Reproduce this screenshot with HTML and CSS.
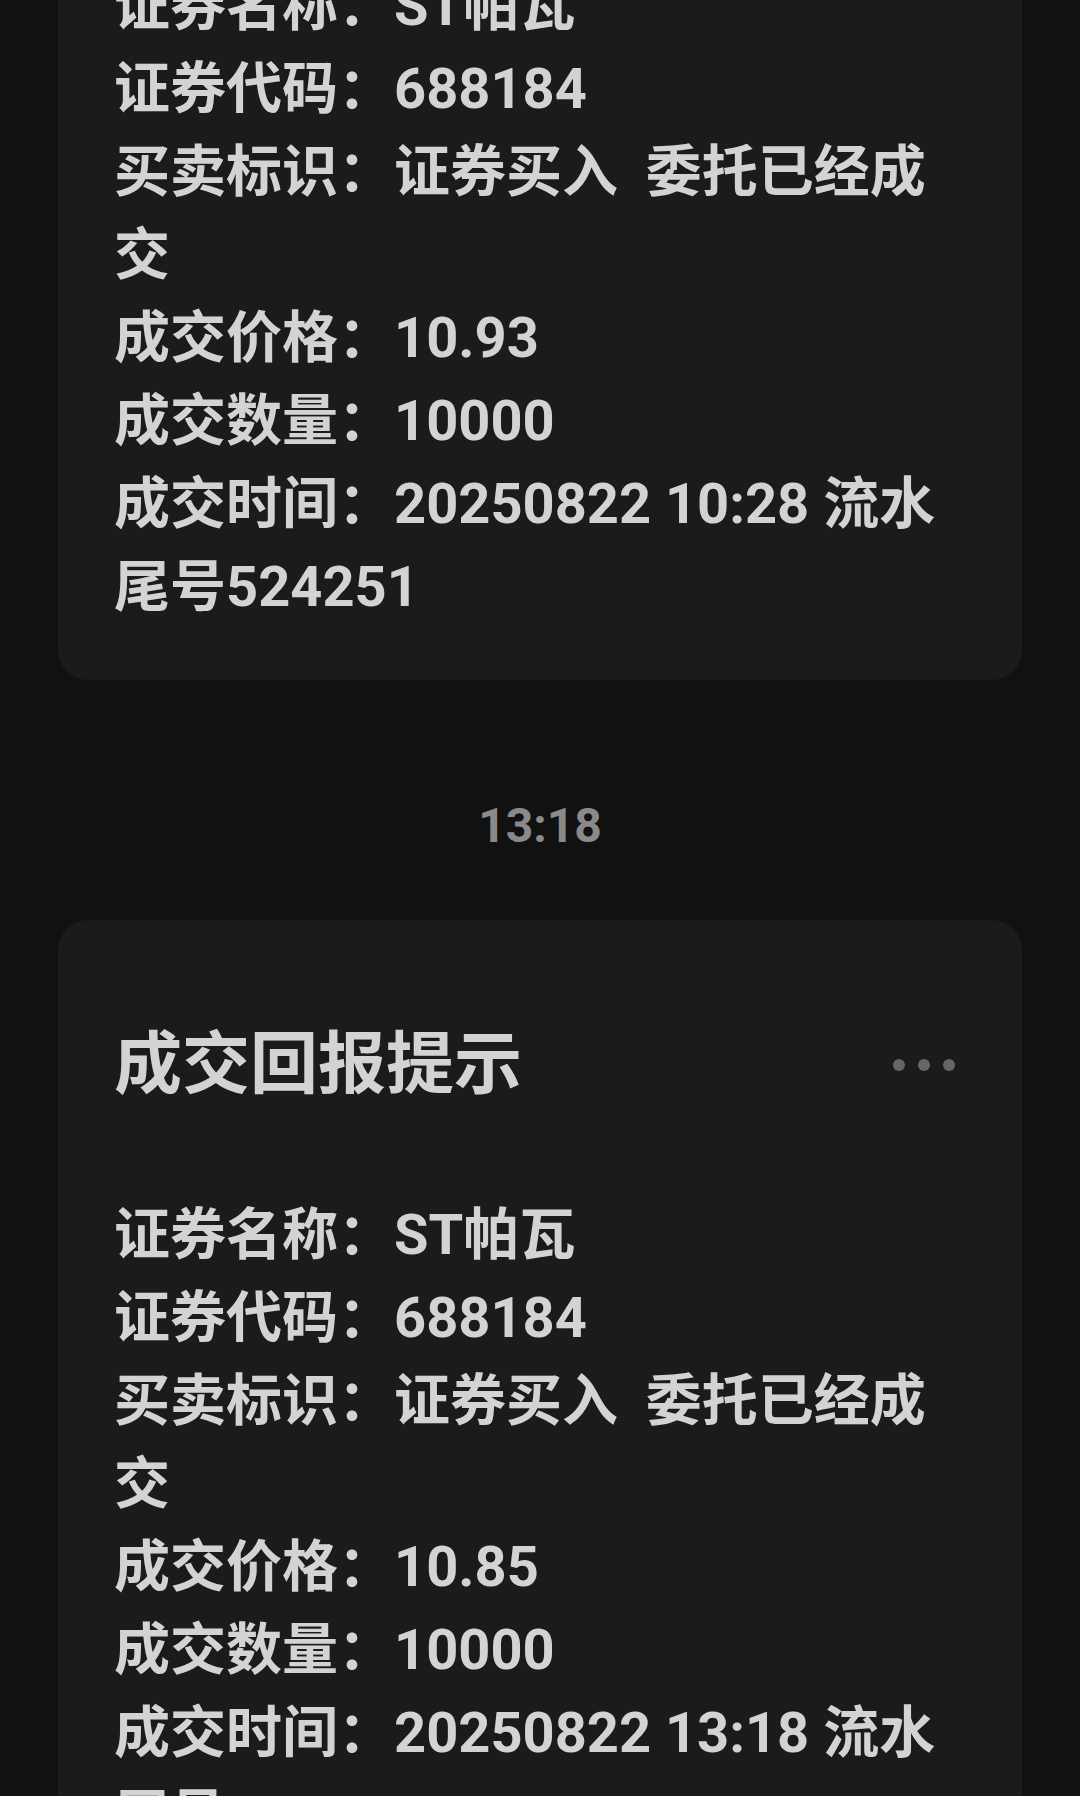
FILE: index.html
```html
<!DOCTYPE html>
<html lang="zh-CN">
<head>
    <meta charset="UTF-8">
    <meta name="viewport" content="width=device-width, initial-scale=1.0">
    <title>成交回报提示</title>
    <link rel="stylesheet" href="styles.css">
</head>
<body>
    <!-- message feed, scrolled part way down -->
    <div class="feed">
        <div class="card">
            <div class="card-head">
                <div class="card-title">成交回报提示</div>
                <div class="more"><span></span><span></span><span></span></div>
            </div>
            <div class="card-body">
                <div>证券名称：ST帕瓦</div>
                <div>证券代码：688184</div>
                <div>买卖标识：证券买入&nbsp; 委托已经成交</div>
                <div>成交价格：10.93</div>
                <div>成交数量：10000</div>
                <div>成交时间：20250822 10:28 流水尾号524251</div>
            </div>
        </div>

        <div class="time">13:18</div>

        <div class="card">
            <div class="card-head">
                <div class="card-title">成交回报提示</div>
                <div class="more"><span></span><span></span><span></span></div>
            </div>
            <div class="card-body">
                <div>证券名称：ST帕瓦</div>
                <div>证券代码：688184</div>
                <div>买卖标识：证券买入&nbsp; 委托已经成交</div>
                <div>成交价格：10.85</div>
                <div>成交数量：10000</div>
                <div>成交时间：20250822 13:18 流水尾号</div>
            </div>
        </div>
    </div>
</body>
</html>
```

FILE: styles.css
```css
/* page */
body {
    margin: 0;
    background-color: #111111;
    font-family: Roboto, "Noto Sans CJK SC", sans-serif;
    font-weight: 700;
    color: #d3d3d3;
    overflow: hidden;
}

/* feed list, offset as if scrolled */
.feed {
    margin-top: -309px;
    padding: 0 58px;
}

/* message card */
.card {
    background: #1b1b1b;
    border-radius: 30px;
    padding: 97px 58px 51px 56px;
}

.card-head {
    display: flex;
    justify-content: space-between;
    align-items: center;
}

.card-title {
    font-size: 68px;
    line-height: 96px;
}

/* three dots menu */
.more {
    display: flex;
    gap: 13px;
    margin-right: 9px;
}

.more span {
    width: 12px;
    height: 12px;
    border-radius: 50%;
    background: #666666;
}

.card-body {
    margin-top: 81px;
    font-size: 56px;
    line-height: 83px;
}

/* time separator */
.time {
    text-align: center;
    font-size: 48px;
    line-height: 56px;
    padding: 118px 0 66px;
    color: #8a8a8a;
}
```
